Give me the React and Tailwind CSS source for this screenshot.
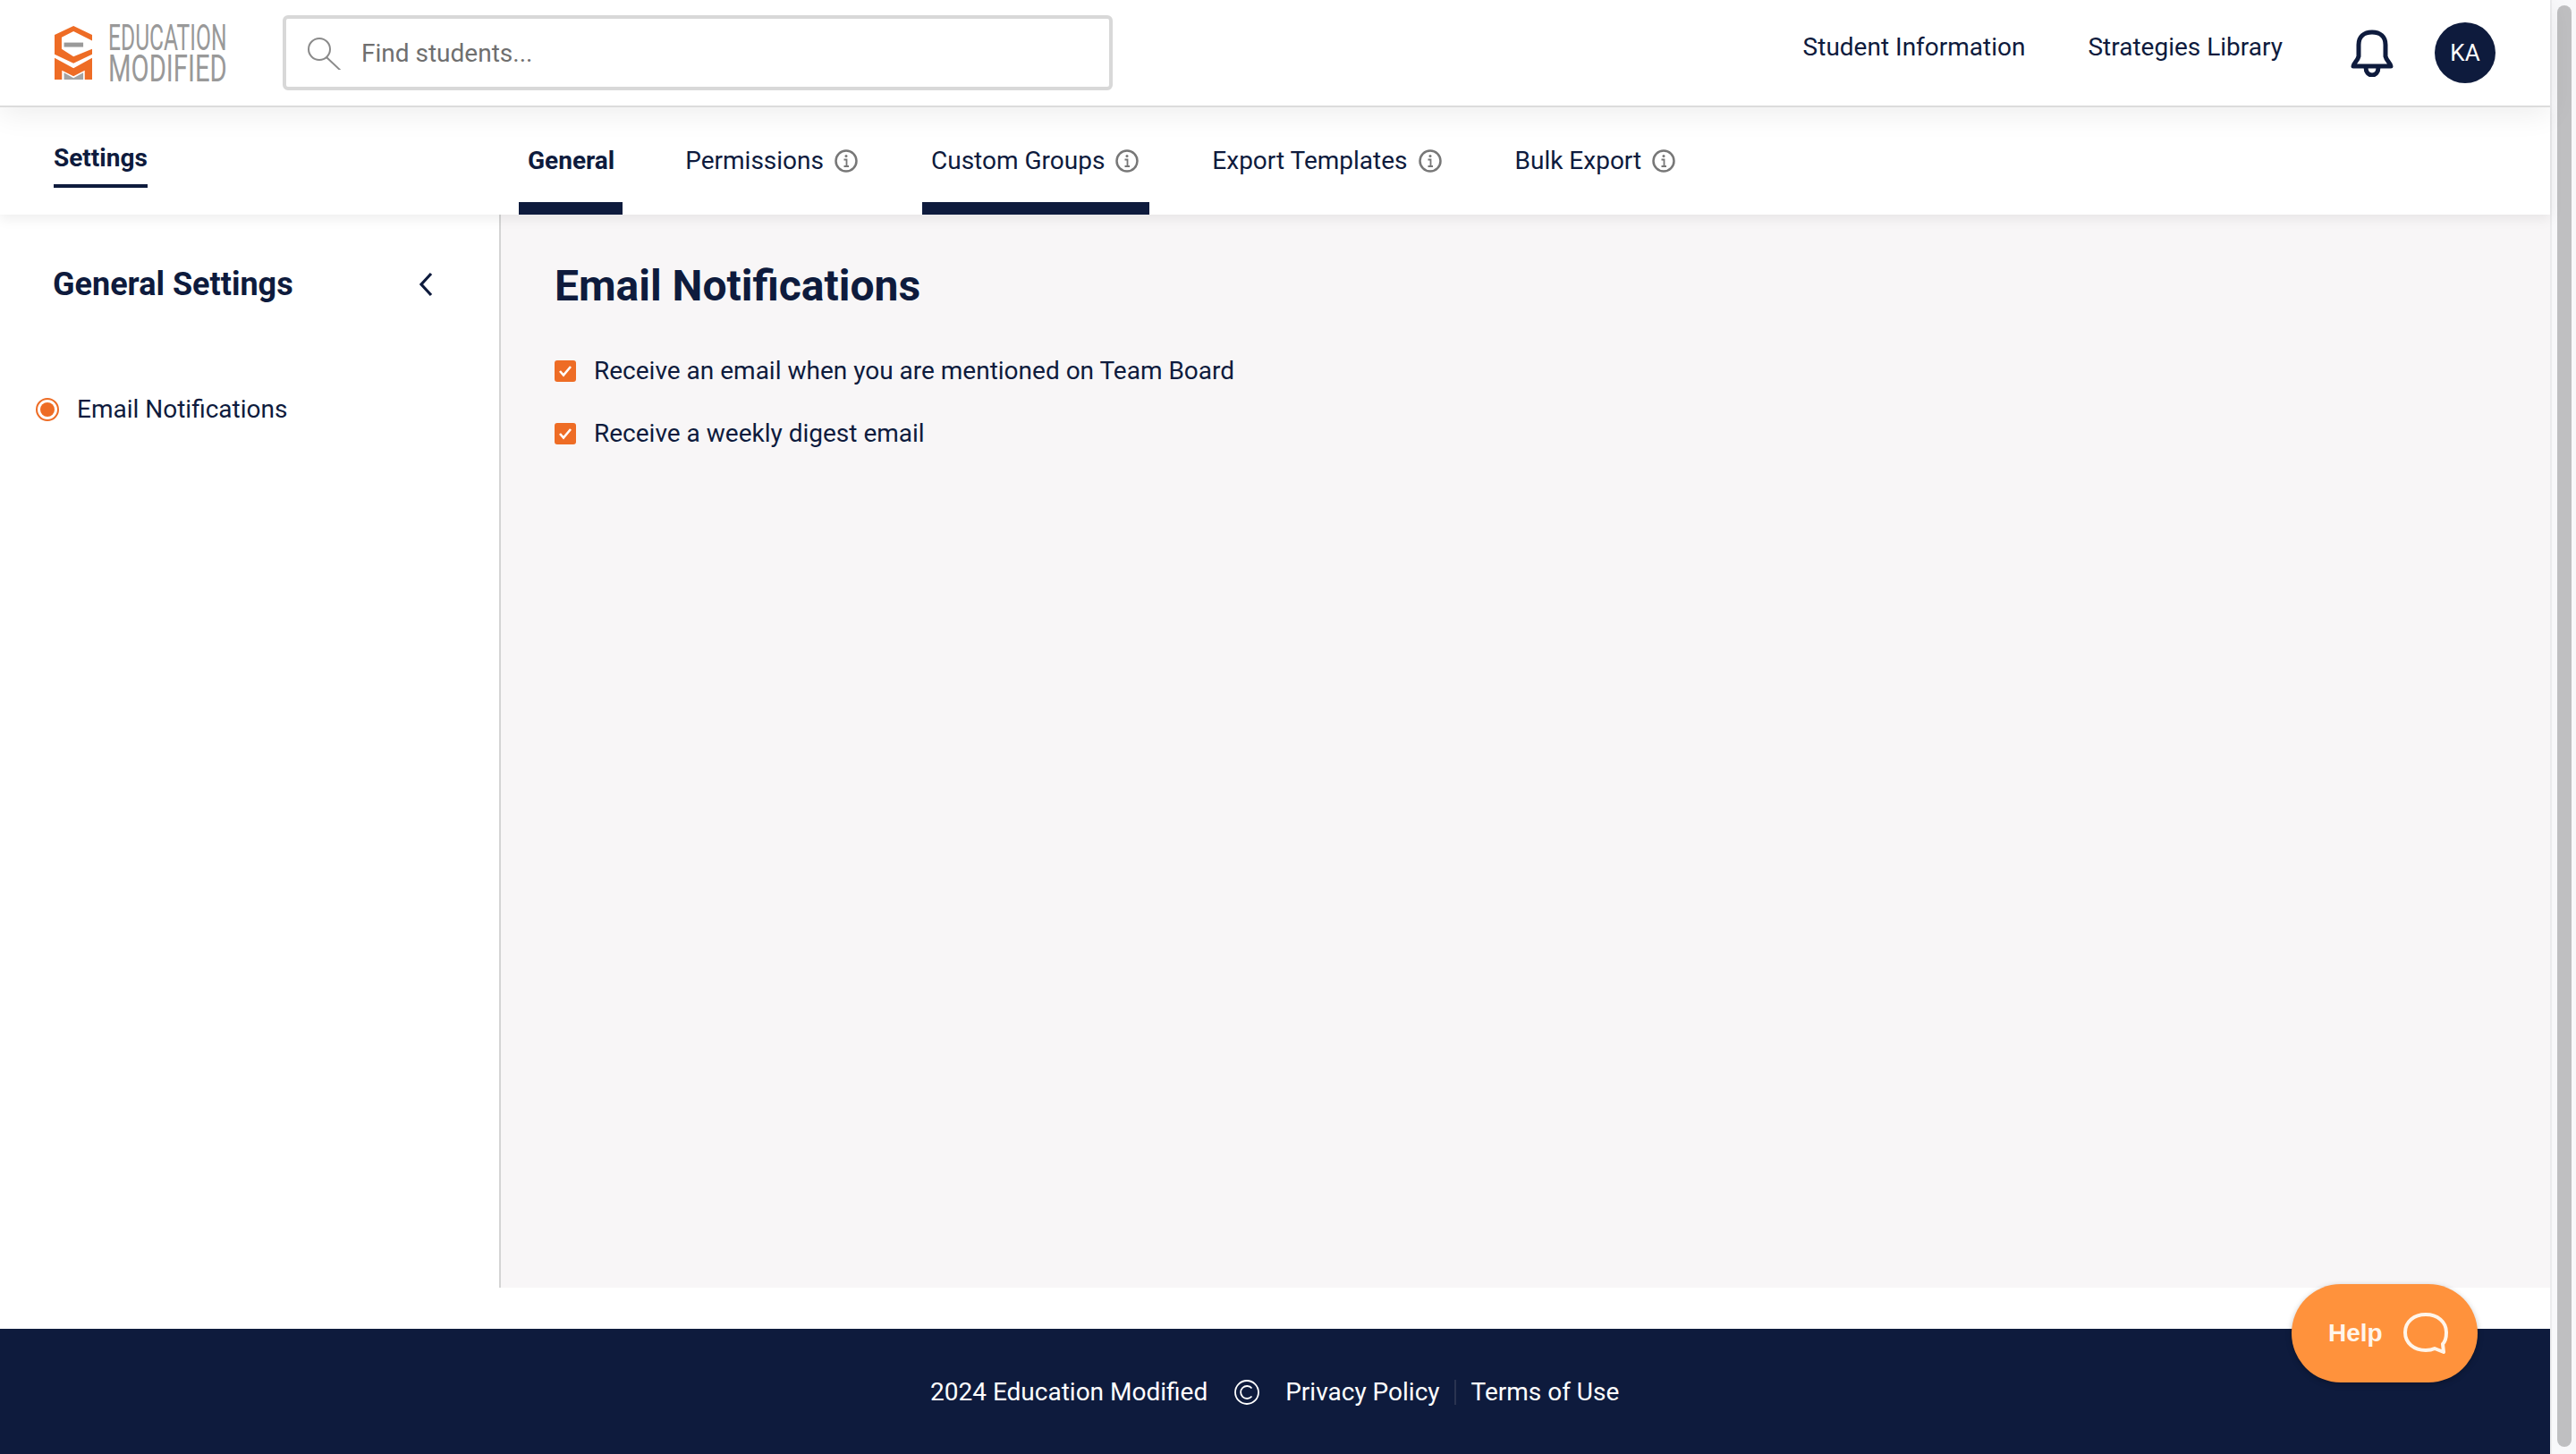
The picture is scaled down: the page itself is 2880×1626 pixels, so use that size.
const navy = "#0e1b3d";

function Logo() {
  return (
    <div className="flex items-center w-[194px] h-[60px] shrink-0">
      <svg width="42" height="60" viewBox="63 62 127 181" className="shrink-0">
        <path fill="#ee6c25" d="M127 62 190 92V112L127 80 87 100V140L127 165 190 140V158L127 188 63 158V92Z" />
        <rect x="95" y="118" width="65" height="15" fill="#9a9a9a" />
        <path fill="#ee6c25" d="M63 170 127 205 190 170V243H165V212L127 232 88 212V243H63Z" />
        <path fill="#a3a3a3" d="M95 243V220L127 238 160 220V243Z" />
      </svg>
      <div className="ml-[18px] font-['Roboto',sans-serif] font-normal text-[#999999]">
        <div className="text-[41px] leading-[34px] h-[34px] w-[134px] whitespace-nowrap origin-left scale-x-[0.6]">EDUCATION</div>
        <div className="text-[43px] leading-[34px] h-[34px] w-[134px] whitespace-nowrap origin-left scale-x-[0.68]">MODIFIED</div>
      </div>
    </div>
  );
}

function SearchIcon() {
  return (
    <svg width="38" height="38" viewBox="0 0 38 38" fill="none" stroke="#8a8a8a" strokeWidth="2" className="shrink-0">
      <circle cx="14" cy="15" r="12" />
      <path d="M22 24 38 39" />
    </svg>
  );
}

function BellIcon() {
  return (
    <svg width="48" height="53" viewBox="0 0 48 53" fill="none" stroke={navy} strokeWidth="5" strokeLinejoin="round">
      <path d="M3 41c0-3 5-6 6-11V17C9 8 15 3 24 3s15 5 15 14v13c1 5 6 8 6 11Z" />
      <path d="M17 42c0 6 3 9 7 9s7-3 7-9" />
    </svg>
  );
}

function InfoIcon() {
  return (
    <svg width="26" height="26" viewBox="0 0 26 26" fill="none" stroke="#777777" className="shrink-0">
      <circle cx="13" cy="13" r="11.5" strokeWidth="2.5" />
      <path d="M10.5 11.5H13.5V19M10.5 19H16" strokeWidth="1.8" />
      <circle cx="13" cy="7.5" r="1.5" fill="#777777" stroke="none" />
    </svg>
  );
}

function CheckRow({ label }) {
  return (
    <div className="flex items-center h-[24px]">
      <div className="w-[24px] h-[24px] rounded-[3px] bg-[#ee6c25] flex items-center justify-center shrink-0">
        <svg width="16" height="14" viewBox="0 0 16 14" fill="none" stroke="#fff" strokeWidth="2.6">
          <path d="M2 7 6 11.5 14 2" />
        </svg>
      </div>
      <span className="ml-[20px] text-[28px] text-[#0e1b3d] whitespace-nowrap">{label}</span>
    </div>
  );
}

function Tab({ label, info, active }) {
  return (
    <div className={`h-[120px] pt-[14px] pl-[10px] flex items-center gap-[12px] whitespace-nowrap border-b-[14px] ${info ? "pr-[12px]" : "pr-[9px]"} ${active ? "border-[#0e1b3d]" : "border-transparent"}`}>
      <span className={`text-[28px] text-[#0e1b3d] ${info ? "" : "font-bold"}`}>{label}</span>
      {info && <InfoIcon />}
    </div>
  );
}

export default function App() {
  return (
    <div className="flex h-screen overflow-hidden bg-white font-['Roboto',sans-serif]">
      <div className="flex-1 min-w-0 flex flex-col relative">
        <header className="relative z-20 h-[120px] shrink-0 bg-white border-b-2 border-[#dcdcdc] flex items-center pl-[61px] pr-[61px] shadow-[0_8px_30px_rgba(0,0,0,0.07)]">
          <Logo />
          <div className="ml-[61px] w-[928px] h-[84px] border-[4px] border-[#d8d8d8] rounded-[6px] flex items-center pl-[23px] gap-[23px]">
            <SearchIcon />
            <span className="text-[28px] text-[#6f6f6f] mt-[1px]">Find students...</span>
          </div>
          <div className="ml-auto flex items-center">
            <a className="text-[28px] text-[#0e1b3d] -mt-[13px]">Student Information</a>
            <a className="ml-[70px] text-[28px] text-[#0e1b3d] -mt-[13px]">Strategies Library</a>
            <div className="ml-[76px]"><BellIcon /></div>
            <div className="ml-[46px] w-[68px] h-[68px] rounded-full bg-[#0e1b3d] text-white text-[26px] flex items-center justify-center">KA</div>
          </div>
        </header>

        <nav className="relative z-10 h-[120px] shrink-0 bg-white flex shadow-[0_4px_14px_rgba(0,0,0,0.08)]">
          <div className="w-[580px] shrink-0 pl-[60px] pt-[40px]">
            <div className="inline-block h-[50px] border-b-[4px] border-[#0e1b3d] text-[28px] font-bold text-[#0e1b3d] leading-[34px]">Settings</div>
          </div>
          <div className="flex gap-[60px]">
            <Tab label="General" active />
            <Tab label="Permissions" info />
            <Tab label="Custom Groups" info active />
            <Tab label="Export Templates" info />
            <Tab label="Bulk Export" info />
          </div>
        </nav>

        <div className="h-[1200px] shrink-0 flex">
          <aside className="w-[560px] shrink-0 bg-white border-r-2 border-[#d4d4d4]">
            <div className="flex items-center justify-between pl-[59px] pr-[74px] pt-[58px] h-[98px]">
              <h2 className="text-[36px] font-bold text-[#0e1b3d] whitespace-nowrap">General Settings</h2>
              <svg width="16" height="28" viewBox="0 0 16 28" fill="none" stroke="#0e1b3d" strokeWidth="3.2">
                <path d="M14 2 3 14 14 26" />
              </svg>
            </div>
            <div className="flex items-center mt-[99px] pl-[40px]">
              <div className="w-[26px] h-[26px] rounded-full border-2 border-[#ee6c25] p-[3px] shrink-0">
                <div className="w-full h-full rounded-full bg-[#ee6c25]" />
              </div>
              <span className="ml-[20px] text-[28px] text-[#0e1b3d]">Email Notifications</span>
            </div>
          </aside>
          <main className="flex-1 bg-[#f8f6f7] pl-[60px] pt-[50px]">
            <h1 className="text-[48px] leading-[60px] font-bold text-[#0e1b3d]">Email Notifications</h1>
            <div className="mt-[53px] flex flex-col gap-[46px]">
              <CheckRow label="Receive an email when you are mentioned on Team Board" />
              <CheckRow label="Receive a weekly digest email" />
            </div>
          </main>
        </div>

        <div className="h-[46px] shrink-0 bg-white" />

        <footer className="h-[140px] shrink-0 bg-[#0e1b3d] text-white text-[28px] flex items-center pl-[1040px] pt-[2px] whitespace-nowrap">
          <span>2024 Education Modified</span>
          <svg width="28" height="28" viewBox="0 0 28 28" fill="none" stroke="#fff" strokeWidth="1.8" className="ml-[30px]">
            <circle cx="14" cy="14" r="13" />
            <path d="M19.5 9.5A7 7 0 1 0 19.5 18.5" />
          </svg>
          <span className="ml-[29px]">Privacy Policy</span>
          <span className="ml-[16px] w-[2px] h-[28px] bg-[#2a3350]" />
          <span className="ml-[17px]">Terms of Use</span>
        </footer>

        <button className="absolute z-30 left-[2562px] top-[1436px] w-[208px] h-[110px] rounded-[55px] bg-[#ff923c] flex items-center pl-[41px] shadow-[0_2px_6px_rgba(0,0,0,0.25)]">
          <span className="font-['Liberation_Sans',sans-serif] font-bold text-[28px] text-[#fff5ea]">Help</span>
          <svg width="50" height="46" viewBox="0 0 50 46" fill="none" stroke="#fff5ea" strokeWidth="4" strokeLinejoin="round" className="ml-[23px]">
            <path d="M25 2C12 2 2 10 2 22s10 20 23 20c4 0 7-.5 10-2l10 4-1-9c3-3 4-8 4-13C48 10 38 2 25 2Z" />
          </svg>
        </button>
      </div>

      <div className="w-[29px] shrink-0 bg-[#f8f8fa] border-l-2 border-[#ececee] pl-[6px] pt-[6px]">
        <div className="w-[16px] h-[1612px] rounded-full bg-[#bfbfc1]" />
      </div>
    </div>
  );
}
